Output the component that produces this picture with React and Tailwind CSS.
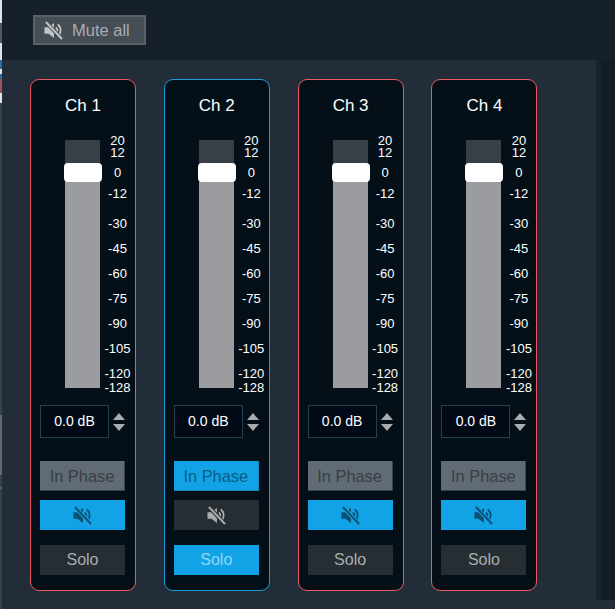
const marks = [
  ["20", 135], ["12", 147], ["0", 167], ["-12", 188], ["-30", 218], ["-45", 243],
  ["-60", 268], ["-75", 293], ["-90", 318], ["-105", 343], ["-120", 368], ["-128", 382],
];

const edge = [
  [23, "bg-[#dfe1e3]"], [20, "bg-[#56585a]"], [17, "bg-[#dfe1e3]"], [9, "bg-[#2a6cb0]"], [5, "bg-[#dfe1e3]"],
  [5, "bg-[#2a6cb0]"], [14, "bg-[#9a5560]"], [10, "bg-[#dfe1e3]"], [312, "bg-[#38424c]"], [60, "bg-[#666a6d]"],
  [12, "bg-[#38424c]"], [2, "bg-[#5a5f63]"], [120, "bg-[#38424c]"],
];

function MuteIcon({ className }) {
  return (
    <svg viewBox="0 0 20 20" className={className} fill="none" stroke="currentColor">
      <path d="M0.5 6.5h4.2L10.5 2v16l-5.8-4.5H0.5z" fill="currentColor" stroke="none" />
      <path d="M12.6 6.6a4.8 4.8 0 0 1 0 6.8" strokeWidth="1.9" />
      <path d="M14.6 3.4a9 9 0 0 1 0 13.2" strokeWidth="1.9" />
      <path d="M2 1 19 19" strokeWidth="4.2" stroke="var(--cut)" />
      <path d="M2 1 19 19" strokeWidth="2.1" />
    </svg>
  );
}

function Strip({ name, red, phase, mute, solo }) {
  const active = "bg-[#12a3e6]";
  return (
    <div
      className={`w-[106px] h-[512px] shrink-0 rounded-[9px] border bg-[#040f18] ${
        red ? "border-[#e85a5f]" : "border-[#1b9ad6]"
      } flex flex-col items-start`}
    >
      <div className="w-full pt-[15px] text-center text-[17px] leading-[22px] text-white">{name}</div>
      <div className="mt-[23px] ml-[34px] flex">
        <div className="relative w-[35px] h-[248px] bg-[#9a9ca0] flex flex-col">
          <div className="h-[30px] bg-[#393f46]" />
          <div className="absolute -left-[1px] top-[23px] w-[38px] h-[19px] rounded-[4px] bg-white" />
        </div>
        <div className="relative w-[35px] h-[248px]">
          {marks.map(([label, top]) => (
            <div
              key={label}
              className="absolute left-0 w-full text-center text-[13px] leading-[12px] text-white"
              style={{ top: top - 140 }}
            >
              {label}
            </div>
          ))}
        </div>
      </div>
      <div className="mt-[17px] ml-[9px] flex items-center gap-[4px]">
        <div className="w-[69px] h-[33px] border border-[#25404f] bg-[#020a18] flex items-center justify-center text-[14px] text-white">
          0.0 dB
        </div>
        <div className="flex flex-col gap-[4px]">
          <div className="w-0 h-0 border-x-[6.5px] border-x-transparent border-b-[7px] border-b-[#a9abad]" />
          <div className="w-0 h-0 border-x-[6.5px] border-x-transparent border-t-[7px] border-t-[#a9abad]" />
        </div>
      </div>
      <div
        className={`mt-[23px] ml-[9px] w-[85px] h-[30px] pt-[1px] flex items-center justify-center text-[16.4px] border-r border-b ${
          phase ? `${active} border-[#1389c0] text-[#0a5c86]` : "bg-[#606b75] border-[#3a444c] text-[#3a3f44]"
        }`}
      >
        In Phase
      </div>
      <div
        className={`mt-[9px] ml-[9px] w-[85px] h-[30px] flex items-center justify-center ${
          mute ? `${active} text-[#0b5073] [--cut:#12a3e6]` : "bg-[#262e33] text-[#a9acae] [--cut:#262e33]"
        }`}
      >
        <MuteIcon className="w-[19px] h-[19px]" />
      </div>
      <div
        className={`mt-[15px] ml-[9px] w-[85px] h-[30px] flex items-center justify-center text-[16px] ${
          solo ? `${active} text-[#8fd6f7]` : "bg-[#262e33] text-[#a9acae]"
        }`}
      >
        Solo
      </div>
    </div>
  );
}

export default function App() {
  return (
    <div className="w-[615px] h-[609px] overflow-hidden bg-[#16202b] flex font-['Liberation_Sans',Arial,sans-serif]">
      <div className="w-[2px] shrink-0 flex flex-col">
        {edge.map(([h, color], i) => (
          <div key={i} className={`shrink-0 ${color}`} style={{ height: h }} />
        ))}
      </div>
      <div className="flex-1 flex flex-col min-w-0">
        <div className="h-[60px] shrink-0 pt-[15px] pl-[31px]">
          <div className="w-[113px] h-[30px] border-2 border-[#5a6269] bg-[#464e55] flex items-center pl-[9px] gap-[9px] text-[16.5px] text-[#a8adb3] [--cut:#464e55]">
            <MuteIcon className="w-[19px] h-[19px] shrink-0 text-[#c2c5c8]" />
            <span>Mute all</span>
          </div>
        </div>
        <div className="h-[540px] flex shrink-0">
          <div className="w-[594px] bg-[#222d39] pl-[28px] pt-[19px] flex gap-[27.8px] items-start">
            <Strip name="Ch 1" red phase={false} mute solo={false} />
            <Strip name="Ch 2" phase mute={false} solo />
            <Strip name="Ch 3" red phase={false} mute solo={false} />
            <Strip name="Ch 4" red phase={false} mute solo={false} />
          </div>
          <div className="w-[5px] bg-[#18232e]" />
          <div className="flex-1 bg-[#131d28]" />
        </div>
        <div className="flex-1 bg-[#222d39]" />
      </div>
    </div>
  );
}
